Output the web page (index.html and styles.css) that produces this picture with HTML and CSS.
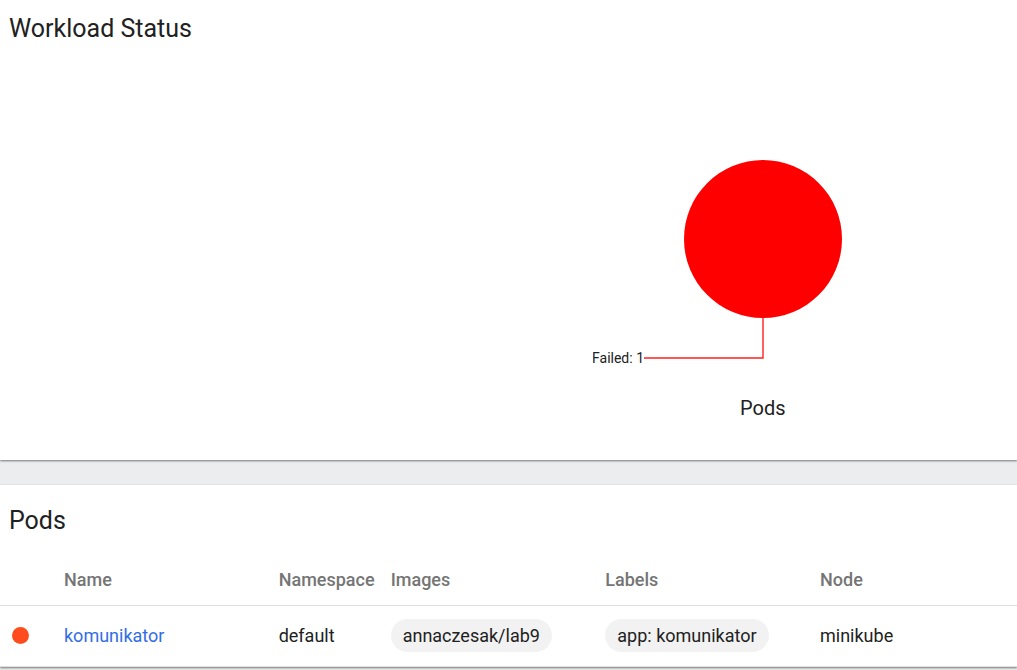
FILE: index.html
```html
<!DOCTYPE html>
<html lang="en">
<head>
<meta charset="utf-8">
<title>Workloads</title>
<link rel="stylesheet" href="styles.css">
</head>
<body>
<main class="page">
  <section class="card">
    <h2 class="title">Workload Status</h2>
    <div class="charts">
      <figure class="chart">
        <svg class="pie" width="340" height="220" viewBox="0 0 340 220" role="img" aria-label="Failed: 1">
          <circle cx="170" cy="79" r="79" fill="#f00"/>
          <path d="M170 158V198H51" fill="none" stroke="#ff2020" stroke-width="1.4"/>
          <text class="pie-label" x="51" y="203" text-anchor="end">Failed: 1</text>
        </svg>
        <figcaption class="caption">Pods</figcaption>
      </figure>
    </div>
  </section>
  <section class="card list">
    <h2 class="title">Pods</h2>
    <table class="pods">
      <thead>
        <tr><th class="col-icon"></th><th>Name</th><th class="col-ns">Namespace</th><th>Images</th><th>Labels</th><th class="col-node">Node</th></tr>
      </thead>
      <tbody>
        <tr><td><span class="dot"></span></td><td><a class="link" href="#">komunikator</a></td><td>default</td><td><span class="chip">annaczesak/lab9</span></td><td><span class="chip">app: komunikator</span></td><td>minikube</td></tr>
      </tbody>
    </table>
  </section>
</main>
</body>
</html>
```
FILE: styles.css
```css
* { box-sizing: border-box; }
body { margin: 0; background: #ecedef; color: #212121; font-family: Roboto, "Liberation Sans", sans-serif; }
.page { display: grid; gap: 25px; padding-bottom: 8px; overflow: hidden; }
.card { background: #fff; box-shadow: 0 1px 2px rgba(0, 0, 0, .5); }
.title { margin: 0; padding: 14px 9px; font-size: 25px; line-height: 29px; font-weight: 400; }
.list { padding-top: 7px; }
.charts { display: grid; grid-template-columns: 1fr 1fr; padding: 103px 0 40px; }
.chart { grid-column: 2; margin: 0; display: flex; flex-direction: column; align-items: center; }
.pie { display: block; }
.pie-label { font-size: 14px; fill: #212121; }
.caption { margin-top: 16px; font-size: 20px; line-height: 24px; }
.pods { width: 100%; table-layout: fixed; border-collapse: collapse; font-size: 18px; line-height: 21px; margin-top: 6px; }
.pods th, .pods td { padding: 0; text-align: left; white-space: nowrap; }
.pods th { height: 50px; color: #757575; font-weight: 500; }
.pods td { height: 61px; border-top: 1px solid #e0e0e0; border-bottom: 1px solid #e0e0e0; }
.col-icon { width: 64px; }
.col-ns { width: 112px; }
.col-node { width: 197px; }
.dot { display: block; width: 17px; height: 17px; margin-left: 12px; border-radius: 50%; background: #ff4c1e; }
.link { color: #326de6; text-decoration: none; }
.chip { display: inline-block; padding: 6px 12px; border-radius: 17px; background: #f2f2f2; }
```
